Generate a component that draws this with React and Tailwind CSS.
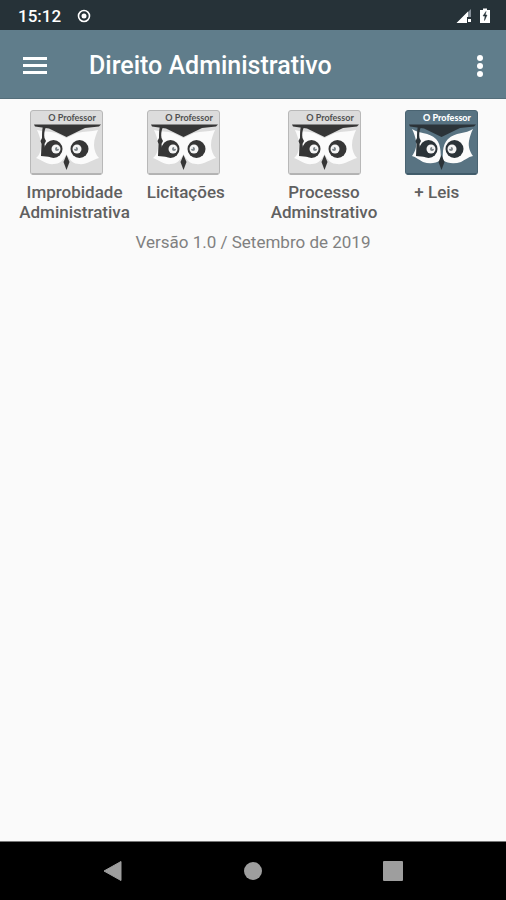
import React from 'react';

const groups = [
  {
    iconsClass: 'pr-[3px]',
    labelsClass: 'gap-[17px] pr-[9px]',
    items: [
      { name: 'Improbidade Administrativa', lines: ['Improbidade', 'Administrativa'] },
      { name: 'Licitações', lines: ['Licitações'] },
    ],
  },
  {
    iconsClass: 'pl-[7px]',
    labelsClass: 'gap-[37px] pr-[29px]',
    items: [
      { name: 'Processo Adminstrativo', lines: ['Processo', 'Adminstrativo'] },
      { name: '+ Leis', lines: ['+ Leis'], dark: true },
    ],
  },
];

const OwlIcon = ({ dark }) => {
  const back = dark ? '#587382' : '#dcdcdc';
  const edge = dark ? '#4a6472' : '#b8b8b8';
  const ink = dark ? '#2b3338' : '#363636';
  const text = dark ? '#ffffff' : '#505050';

  return (
    <svg viewBox="0 0 73 65" className="h-[65px] w-[73px]" aria-hidden="true">
      <rect x="0.5" y="0.5" width="72" height="64" rx="2.5" fill={back} stroke={edge} />
      <path d="M2 63.8h69" stroke={dark ? '#35505e' : '#a3a3a3'} strokeWidth="1" />
      <text x="42" y="11" textAnchor="middle" fontFamily="Lato, sans-serif" fontWeight={dark ? 900 : 700} fontSize="9" fill={text}>
        O Professor
      </text>
      {/* face */}
      {dark ? (
        <g fill="#fbfbfb">
          <path d="M7 19C14 24 24 22 31 29C34 32 35 36 35.500 41L36 50C30 54 24 54 18 52C14 50 11 47 7 46C10 42 12 37 11 31C10 26 9 23 7 19Z" />
          <path d="M68 19C61 24 50 22 43 29C40 32 38.500 36 38 41L37.500 50C43 54 50 54 56 52C60 50 63 47 68 46C65 42 63 37 64 31C65 26 66 23 68 19Z" />
        </g>
      ) : (
        <path
          d="M7 20C13 22 20 21 26 23L36.500 28L47 23C54 21 61 22 68 20C66 25 64 29 64 35C64 40 66 45 69 48C62 50 56 55 49 54C44 54 40 51 36.500 44C33 51 29 54 24 54C17 55 12 50 6 48C10 45 11 40 11 35C11 29 9 25 7 20Z"
          fill="#fbfbfb"
        />
      )}
      {/* cap and tassel */}
      <path d="M4 14.500H71L69 16.500L55 18L36.500 27L19 18.500L5 16.500Z" fill={ink} />
      <path d="M13 16L16 17C14 21 14 25 14.500 28L16 31L14.500 34L15 38L21 47L11 46L11.500 34L10.500 31L12 28C12 24 12 20 13 16Z" fill={ink} />
      {/* eyes */}
      <circle cx="23.500" cy="39" r="9" fill={ink} />
      <circle cx="49.500" cy="39" r="9" fill={ink} />
      <circle cx="26" cy="39" r="4.500" fill="#f5f5f5" />
      <circle cx="47" cy="39" r="4.500" fill="#f5f5f5" />
      <circle cx="27" cy="39" r="2" fill="#7c858a" />
      <circle cx="46" cy="39" r="2" fill="#7c858a" />
      <circle cx="28" cy="38" r="1" fill="#fff" />
      <circle cx="45" cy="38" r="1" fill="#fff" />
      {/* beak */}
      <path d="M36.500 45L39.500 52L36.500 60L33.500 52Z" fill={ink} />
    </svg>
  );
};

const StatusBar = () => (
  <div className="flex h-[30px] items-center bg-[#263238] pl-[18px] pr-4 pt-0.5 text-white">
    <span className="text-[17px] font-medium leading-6">15:12</span>
    <svg viewBox="0 0 14 14" className="ml-4 size-[14px]" aria-hidden="true">
      <circle cx="7" cy="7" r="5.500" fill="none" stroke="#fff" strokeWidth="1.600" />
      <circle cx="7" cy="7" r="2.500" fill="#fff" />
    </svg>
    <svg viewBox="0 0 16 16" className="ml-auto size-4" aria-hidden="true">
      <path d="M15 1V15H1Z" fill="#87919a" />
      <path d="M12 3.500V15H0.500Z" fill="#fff" />
      <rect x="11" y="9" width="5" height="7" fill="#263238" />
      <rect x="12" y="11" width="3" height="3" fill="#fff" />
    </svg>
    <svg viewBox="0 0 10 16" className="ml-2 h-4 w-[10px]" aria-hidden="true">
      <path d="M0 2H3V0.500H7V2H10V15H0Z" fill="#fff" />
      <path d="M6 3.500L3 8H5L4.500 12.500L7 7H5.200Z" fill="#263238" stroke="#263238" strokeWidth="0.500" />
    </svg>
  </div>
);

const AppHeader = () => (
  <header className="flex h-[69px] items-center border-b border-[#546e7a] bg-[#607d8b] pl-[23px] pr-[18px] pt-[3px] text-white">
    <button type="button" aria-label="Menu" className="flex w-6 flex-col gap-1">
      <span className="h-[3px] w-full bg-white" />
      <span className="h-[3px] w-full bg-white" />
      <span className="h-[3px] w-full bg-white" />
    </button>
    <h1 className="ml-[42px] flex-1 text-[25px] font-medium leading-[33px]">Direito Administrativo</h1>
    <button type="button" aria-label="Mais opções" className="flex w-4 flex-col items-center gap-0.5">
      <span className="size-[6px] rounded-full bg-white" />
      <span className="size-[6px] rounded-full bg-white" />
      <span className="size-[6px] rounded-full bg-white" />
    </button>
  </header>
);

const NavBar = () => (
  <nav className="flex h-[59px] items-center justify-center gap-[113px] border-t border-[#777777] bg-black">
    <button type="button" aria-label="Voltar" className="p-1">
      <svg viewBox="0 0 20 22" className="h-[22px] w-5" aria-hidden="true">
        <path d="M1 11L18 1.500V20.500Z" fill="#9e9e9e" stroke="#9e9e9e" strokeLinejoin="round" />
      </svg>
    </button>
    <button type="button" aria-label="Início" className="p-1">
      <span className="block size-[18px] rounded-full bg-[#9e9e9e]" />
    </button>
    <button type="button" aria-label="Recentes" className="p-1">
      <span className="block size-5 rounded-[1px] bg-[#9e9e9e]" />
    </button>
  </nav>
);

const App = () => {
  return (
    <div className="flex min-h-screen flex-col bg-[#fafafa] font-['Roboto',sans-serif]">
      <StatusBar />
      <AppHeader />

      <main className="flex-1 pt-[11px]">
        <div className="grid grid-cols-2">
          {groups.map((group) => (
            <section key={group.items[0].name}>
              <div className={`flex justify-center gap-11 ${group.iconsClass}`}>
                {group.items.map((item) => (
                  <button key={item.name} type="button" aria-label={item.name}>
                    <OwlIcon dark={item.dark} />
                  </button>
                ))}
              </div>
              <div className={`mt-[7px] flex justify-center ${group.labelsClass}`}>
                {group.items.map((item) => (
                  <p key={item.name} className="text-center text-[17px] font-medium leading-5 text-[#606060]">
                    {item.lines.map((line) => (
                      <span key={line} className="block whitespace-nowrap">{line}</span>
                    ))}
                  </p>
                ))}
              </div>
            </section>
          ))}
        </div>

        <p className="mt-[10px] text-center text-[17px] leading-5 text-[#808080]">
          Versão 1.0 / Setembro de 2019
        </p>
      </main>

      <NavBar />
    </div>
  );
};

export default App;
